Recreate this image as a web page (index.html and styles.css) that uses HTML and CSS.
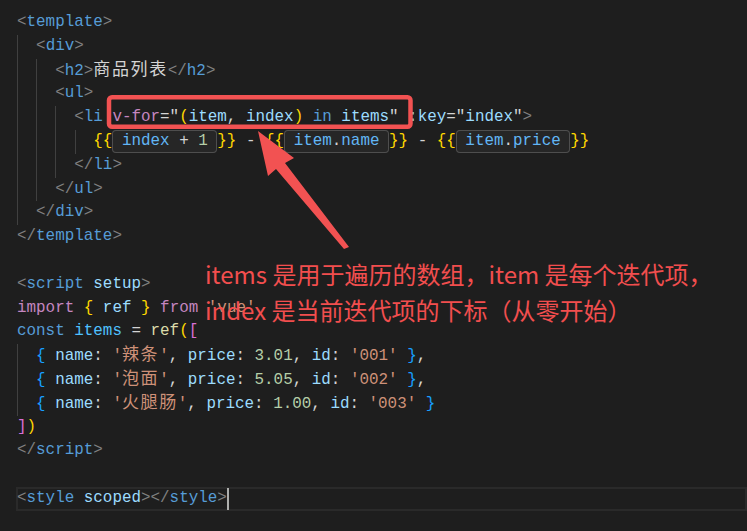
FILE: index.html
```html
<!DOCTYPE html>
<html lang="zh-CN">
<head>
  <meta charset="UTF-8" />
  <meta name="viewport" content="width=device-width, initial-scale=1.0" />
  <title>App.vue</title>
  <link rel="stylesheet" href="styles.css">
</head>
<body>
  <div class="editor">
    <div class="line"><span class="pt">&lt;</span><span class="tag">template</span><span class="pt">&gt;</span></div>
    <div class="line g1">  <span class="pt">&lt;</span><span class="tag">div</span><span class="pt">&gt;</span></div>
    <div class="line g2">    <span class="pt">&lt;</span><span class="tag">h2</span><span class="pt">&gt;</span><span class="zh">商品列表</span><span class="pt">&lt;/</span><span class="tag">h2</span><span class="pt">&gt;</span></div>
    <div class="line g2">    <span class="pt">&lt;</span><span class="tag">ul</span><span class="pt">&gt;</span></div>
    <div class="line g3">      <span class="pt">&lt;</span><span class="tag">li</span> <span class="dir">v-for</span>="<span class="b1">(</span><span class="attr">item</span>, <span class="attr">index</span><span class="b1">)</span> <span class="kw">in</span> <span class="attr">items</span>" <span class="attr">:key</span>="<span class="attr">index</span>"<span class="pt">&gt;</span></div>
    <div class="line g4">        <span class="b1">{{</span><span class="interp"> <span class="var">index</span> + <span class="num">1</span> </span><span class="b1">}}</span> - <span class="b1">{{</span><span class="interp"> <span class="var">item</span>.<span class="var">name</span> </span><span class="b1">}}</span> - <span class="b1">{{</span><span class="interp"> <span class="var">item</span>.<span class="var">price</span> </span><span class="b1">}}</span></div>
    <div class="line g3">      <span class="pt">&lt;/</span><span class="tag">li</span><span class="pt">&gt;</span></div>
    <div class="line g2">    <span class="pt">&lt;/</span><span class="tag">ul</span><span class="pt">&gt;</span></div>
    <div class="line g1">  <span class="pt">&lt;/</span><span class="tag">div</span><span class="pt">&gt;</span></div>
    <div class="line"><span class="pt">&lt;/</span><span class="tag">template</span><span class="pt">&gt;</span></div>
    <div class="line"></div>
    <div class="line"><span class="pt">&lt;</span><span class="tag">script</span> <span class="attr">setup</span><span class="pt">&gt;</span></div>
    <div class="line"><span class="kw2">import</span> <span class="b1">{</span> <span class="attr">ref</span> <span class="b1">}</span> <span class="kw2">from</span> <span class="str">'vue'</span></div>
    <div class="line"><span class="kw">const</span> <span class="const">items</span> = <span class="fn">ref</span><span class="b1">(</span><span class="b2">[</span></div>
    <div class="line g1">  <span class="b3">{</span> <span class="attr">name</span>: <span class="str">'<span class="zh">辣条</span>'</span>, <span class="attr">price</span>: <span class="num">3.01</span>, <span class="attr">id</span>: <span class="str">'001'</span> <span class="b3">}</span>,</div>
    <div class="line g1">  <span class="b3">{</span> <span class="attr">name</span>: <span class="str">'<span class="zh">泡面</span>'</span>, <span class="attr">price</span>: <span class="num">5.05</span>, <span class="attr">id</span>: <span class="str">'002'</span> <span class="b3">}</span>,</div>
    <div class="line g1">  <span class="b3">{</span> <span class="attr">name</span>: <span class="str">'<span class="zh">火腿肠</span>'</span>, <span class="attr">price</span>: <span class="num">1.00</span>, <span class="attr">id</span>: <span class="str">'003'</span> <span class="b3">}</span></div>
    <div class="line"><span class="b2">]</span><span class="b1">)</span></div>
    <div class="line"><span class="pt">&lt;/</span><span class="tag">script</span><span class="pt">&gt;</span></div>
    <div class="line"></div>
    <div class="line current"><span class="pt">&lt;</span><span class="tag">style</span> <span class="attr">scoped</span><span class="pt">&gt;&lt;/</span><span class="tag">style</span><span class="pt">&gt;</span><span class="cursor"></span></div>
  </div>

  <!-- annotation layer drawn over the code -->
  <svg class="marks" width="747" height="531" viewBox="0 0 747 531">
    <rect x="109" y="97.25" width="301.5" height="29.5" rx="3" fill="none" stroke="#f25252" stroke-width="4.5"/>
    <polygon points="258,131 294,158 285,163 349,247 344,249 276,169 268,176" fill="#f25252"/>
  </svg>
  <div class="note">
    <div>items 是用于遍历的数组，item 是每个迭代项，</div>
    <div>index 是当前迭代项的下标（从零开始）</div>
  </div>
</body>
</html>
```

FILE: styles.css
```css
html, body {
  margin: 0;
  padding: 0;
  height: 100%;
  overflow: hidden;
}
body {
  background-color: #1e1e1e;
  color: #d4d4d4;
  position: relative;
}

.editor {
  padding-top: 11px;
  font-family: "Liberation Mono", "DejaVu Sans Mono", monospace;
  font-size: 15.9px;
}
.line {
  height: 23.8px;
  line-height: 23.8px;
  padding-left: 17px;
  white-space: pre;
  --guide: linear-gradient(#404040, #404040);
}

/* indent guides */
.g1 {
  background: var(--guide) 17px 0 / 1px 100% no-repeat;
}
.g2 {
  background: var(--guide) 17px 0 / 1px 100% no-repeat,
              var(--guide) 36px 0 / 1px 100% no-repeat;
}
.g3 {
  background: var(--guide) 17px 0 / 1px 100% no-repeat,
              var(--guide) 36px 0 / 1px 100% no-repeat,
              var(--guide) 55px 0 / 1px 100% no-repeat;
}
.g4 {
  background: var(--guide) 17px 0 / 1px 100% no-repeat,
              var(--guide) 36px 0 / 1px 100% no-repeat,
              var(--guide) 55px 0 / 1px 100% no-repeat,
              var(--guide) 75px 0 / 1px 100% no-repeat;
}

.current {
  margin-left: 16px;
  padding-left: 1px;
  box-shadow: inset 0 0 0 2px #2a2a2a;
}
.cursor {
  display: inline-block;
  width: 2px;
  height: 22px;
  margin-right: -2px;
  vertical-align: top;
  margin-top: 1px;
  background-color: #aeafad;
}

/* syntax colours */
.pt { color: #808080; }
.tag { color: #569cd6; }
.attr { color: #9cdcfe; }
.dir { color: #c586c0; }
.kw { color: #569cd6; }
.kw2 { color: #c586c0; }
.str { color: #ce9178; }
.num { color: #b5cea8; }
.fn { color: #dcdcaa; }
.const { color: #4fc1ff; }
.var { color: #62b6f5; }
.b1 { color: #ffd700; }
.b2 { color: #da70d6; }
.b3 { color: #179fff; }

.zh {
  font-family: "Noto Sans CJK SC", sans-serif;
  font-size: 17px;
  line-height: 1;
  letter-spacing: 1.6px;
}

.interp {
  display: inline-block;
  height: 23px;
  line-height: 23px;
  vertical-align: top;
  border-radius: 4px;
  background-color: #262626;
  box-shadow: inset 0 0 0 1px #4e4e4e;
}

/* annotation */
.marks {
  position: absolute;
  top: 0;
  left: 0;
  pointer-events: none;
}
.note {
  position: absolute;
  top: 256px;
  left: 205px;
  font-family: "Noto Sans CJK SC", sans-serif;
  font-size: 24px;
  line-height: 36px;
  color: #f24e4e;
  white-space: nowrap;
}
```
